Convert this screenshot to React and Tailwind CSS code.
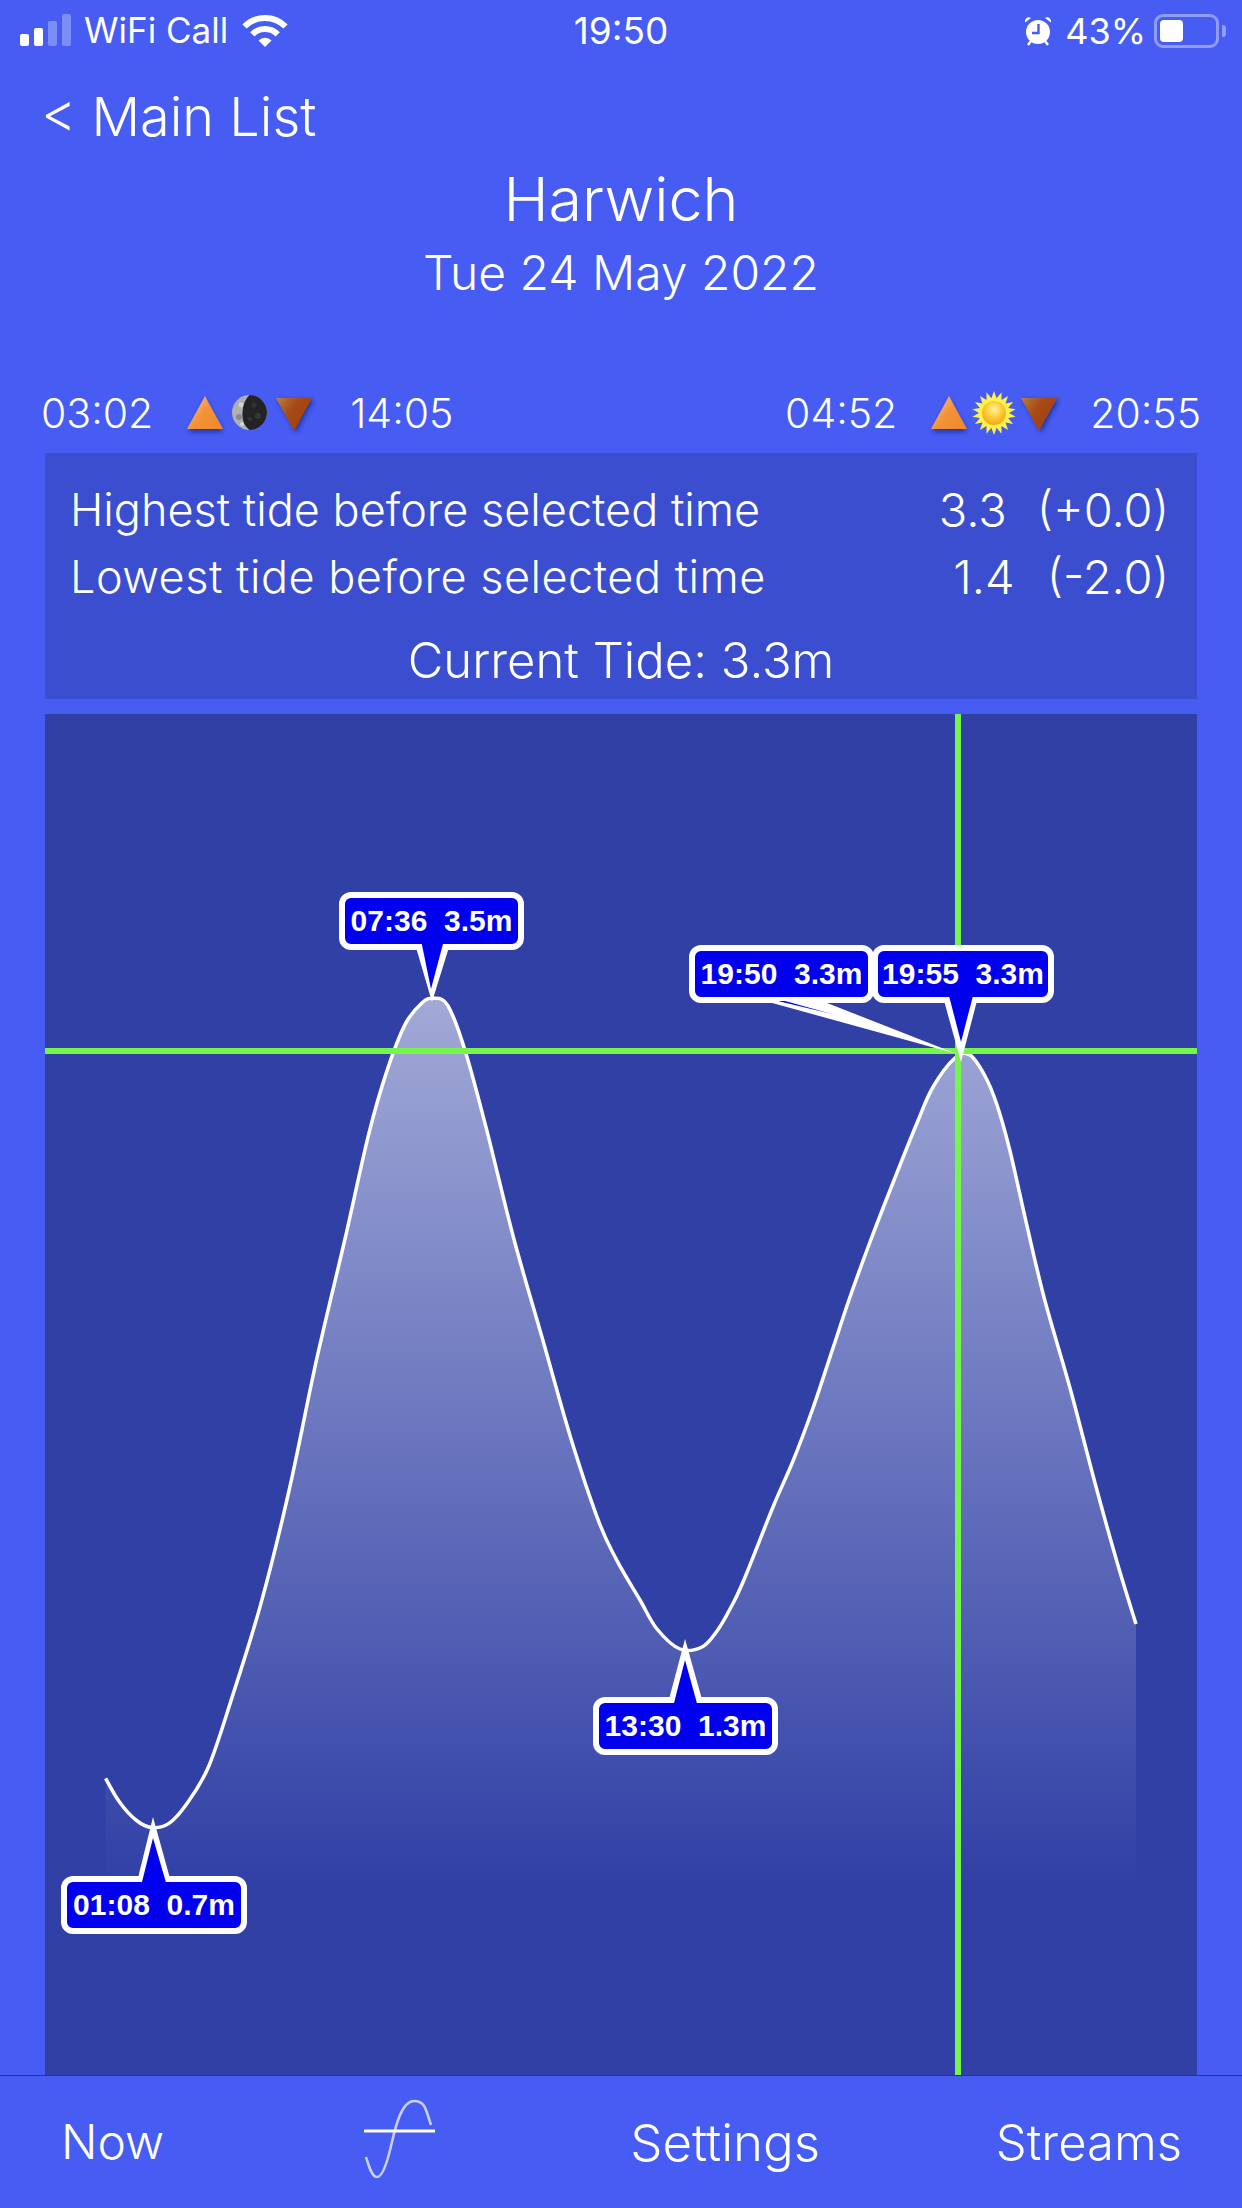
const pts = [...[[75,1263],[85,1280],[97,1293],[108,1298],[120,1295],[132,1282],[148,1255],[165,1205],[185,1140],[205,1060],[225,965],[245,880],[262,805],[275,760],[288,727],[300,712],[308,709],[318,714],[330,745],[345,800],[365,880],[385,950],[405,1020],[425,1080],[438,1108]].map(([x, y]) => [x * 1.408, y * 1.408]),
  [640,1600],[657,1629],[680,1649],[702,1647],[717,1631],[730,1609],[743,1582],[773,1507],[793,1461],[813,1408],[833,1348],[850,1297],[870,1242],[887,1198],[917,1123],[933,1087],[955,1058],[970,1055],[985,1076],[997,1105],[1010,1151],[1027,1226],[1045,1301],[1070,1388],[1095,1483],[1117,1562],[1136,1624]];

function curvePath() {
  let d = `M${pts[0][0].toFixed(1)} ${pts[0][1].toFixed(1)}`;
  for (let i = 0; i < pts.length - 1; i++) {
    const p0 = pts[Math.max(i - 1, 0)], p1 = pts[i], p2 = pts[i + 1], p3 = pts[Math.min(i + 2, pts.length - 1)];
    const c1 = [p1[0] + (p2[0] - p0[0]) / 6, p1[1] + (p2[1] - p0[1]) / 6];
    const c2 = [p2[0] - (p3[0] - p1[0]) / 6, p2[1] - (p3[1] - p1[1]) / 6];
    d += ` C${c1[0].toFixed(1)} ${c1[1].toFixed(1)} ${c2[0].toFixed(1)} ${c2[1].toFixed(1)} ${p2[0].toFixed(1)} ${p2[1].toFixed(1)}`;
  }
  return d;
}
const line = curvePath();
const area = `${line} L${pts[pts.length - 1][0].toFixed(1)} 1890 L${pts[0][0].toFixed(1)} 1890 Z`;

function Triangle({ down }) {
  const id = down ? "triDown" : "triUp";
  return (
    <svg width="44" height="44" viewBox="0 0 44 44" className={`shrink-0 -mx-[4px] ${down ? "mt-[7px]" : "mt-[3px]"}`}>
      <defs>
        <linearGradient id={id} x1="0" y1="0" x2="1" y2="0.7">
          {down ? (
            <>
              <stop offset="0" stopColor="#b8803f" />
              <stop offset="0.45" stopColor="#a64a16" />
              <stop offset="1" stopColor="#a13f10" />
            </>
          ) : (
            <>
              <stop offset="0" stopColor="#f8cfa3" />
              <stop offset="0.55" stopColor="#f39238" />
              <stop offset="1" stopColor="#f18a2c" />
            </>
          )}
        </linearGradient>
        <filter id={id + "s"} x="-30%" y="-30%" width="160%" height="160%">
          <feGaussianBlur stdDeviation="2" />
        </filter>
      </defs>
      <polygon
        points={down ? "6,5 42,5 24,38" : "22,6 40,39 6,39"}
        fill="#1c2a80"
        opacity="0.75"
        filter={`url(#${id}s)`}
      />
      <polygon points={down ? "4,3 40,3 22,36" : "22,3 40,36 4,36"} fill={`url(#${id})`} />
    </svg>
  );
}

function Moon() {
  return (
    <svg width="35" height="35" viewBox="0 0 35 35" className="shrink-0 mt-[-2px]">
      <circle cx="17.5" cy="17.5" r="17.5" fill="#b0b0b2" />
      <circle cx="7" cy="22" r="3" fill="#8a8a8c" />
      <circle cx="9" cy="10" r="2.4" fill="#d6d6d8" />
      <circle cx="10" cy="29" r="2" fill="#d8d8d8" />
      <path d="M17.5 0A17.5 17.5 0 0 1 17.5 35Q9.5 29 10.5 17.5Q11 6 17.5 0Z" fill="#232325" />
      <circle cx="22" cy="10" r="2.6" fill="#333335" />
      <circle cx="26" cy="21" r="3" fill="#363638" />
      <circle cx="18" cy="24" r="2" fill="#353537" />
    </svg>
  );
}

function Sun() {
  const rays = [];
  const n = 18;
  for (let i = 0; i < n * 2; i++) {
    const r = i % 2 === 0 ? 22 : 15;
    const a = (i / (n * 2)) * Math.PI * 2 - Math.PI / 2;
    rays.push(`${(22 + r * Math.cos(a)).toFixed(1)},${(22 + r * Math.sin(a)).toFixed(1)}`);
  }
  return (
    <svg width="44" height="44" viewBox="0 0 44 44" className="shrink-0">
      <defs>
        <radialGradient id="sunCore" cx="0.5" cy="0.35" r="0.7">
          <stop offset="0" stopColor="#fff49a" />
          <stop offset="0.55" stopColor="#fcc62c" />
          <stop offset="1" stopColor="#f0a020" />
        </radialGradient>
      </defs>
      <polygon points={rays.join(" ")} fill="#fdf24a" />
      <circle cx="22" cy="22" r="12" fill="url(#sunCore)" />
    </svg>
  );
}

function Callout({ pos, children }) {
  return (
    <div className={`absolute h-[58px] flex items-center justify-center rounded-[12px] border-[6px] border-white bg-[#0000ee] font-['Liberation_Sans',sans-serif] text-[30px] font-bold leading-none whitespace-pre text-white ${pos}`}>
      {children}
    </div>
  );
}

function Tail({ outer, inner }) {
  return (
    <>
      <polygon points={outer} fill="#fff" />
      <polygon points={inner} fill="#0000ee" />
    </>
  );
}

export default function App() {
  return (
    <div className="w-[1242px] h-[2208px] flex flex-col overflow-hidden bg-[#465cf3] text-white font-['Inter',sans-serif] font-light">
      {/* status bar */}
      <div className="h-[61px] shrink-0 relative flex items-center">
        <div className="flex items-end gap-[5px] ml-[20px] h-[32px] mt-[-2px]">
          <div className="w-[9px] h-[12px] rounded-[2px] bg-white" />
          <div className="w-[9px] h-[18px] rounded-[2px] bg-white" />
          <div className="w-[9px] h-[25px] rounded-[2px] bg-white/30" />
          <div className="w-[9px] h-[32px] rounded-[2px] bg-white/30" />
        </div>
        <span className="ml-[13px] text-[35px] leading-none font-normal">WiFi Call</span>
        <svg width="46" height="33" viewBox="0 0 46 33" className="ml-[14px] mt-[-1px]">
          <path d="M2.5 12.5A29 29 0 0 1 43.5 12.5" fill="none" stroke="#fff" strokeWidth="6" />
          <path d="M10.3 20.3A18 18 0 0 1 35.7 20.3" fill="none" stroke="#fff" strokeWidth="6" />
          <path d="M23 33L16.5 26.5A9.2 9.2 0 0 1 29.5 26.5Z" fill="#fff" />
        </svg>
        <span className="absolute left-0 right-0 text-center text-[37px] leading-none font-normal">19:50</span>
        <div className="ml-auto flex items-center">
          <svg width="28" height="30" viewBox="0 0 28 30">
            <circle cx="14" cy="16" r="12" fill="#fff" />
            <path d="M1 6.5A4 4 0 0 1 7 2ZM27 6.5A4 4 0 0 0 21 2Z" fill="#fff" />
            <path d="M4 29l3-4M24 29l-3-4" stroke="#fff" strokeWidth="2.4" />
            <path d="M14.5 8v9H8" fill="none" stroke="#465cf3" strokeWidth="2.4" />
          </svg>
          <span className="ml-[13px] text-[36px] leading-none font-normal">43%</span>
          <div className="ml-[8px] w-[65px] h-[34px] rounded-[9px] border-[3px] border-white/40 p-[3px] flex">
            <div className="w-[23px] h-full rounded-[4px] bg-white" />
          </div>
          <div className="ml-[3px] mr-[16px] w-[4px] h-[12px] rounded-r-[3px] bg-white/40" />
        </div>
      </div>

      {/* heading */}
      <div className="h-[111px] shrink-0 pl-[41px] text-[54px] leading-[111px]">&lt; Main List</div>
      <h1 className="h-[55px] shrink-0 text-center text-[61px] leading-[55px] font-light">Harwich</h1>
      <div className="h-[91px] shrink-0 text-center text-[48px] leading-[91px]">Tue 24 May 2022</div>

      {/* tide/sun row */}
      <div className="mt-[60px] h-[70px] shrink-0 flex items-center justify-between px-[41px] text-[41px] leading-none">
        <div className="flex items-center">
          <span>03:02</span>
          <div className="ml-[34px] flex items-center gap-[9px]">
            <Triangle />
            <Moon />
            <Triangle down />
          </div>
          <span className="ml-[38px]">14:05</span>
        </div>
        <div className="flex items-center">
          <span>04:52</span>
          <div className="ml-[34px] flex items-center gap-[5px]">
            <Triangle />
            <Sun />
            <Triangle down />
          </div>
          <span className="ml-[33px]">20:55</span>
        </div>
      </div>

      {/* info panel */}
      <div className="mt-[5px] mx-[45px] h-[246px] shrink-0 bg-[#3b4ed0] pt-[26px] pl-[25px] pr-[28px]">
        <div className="h-[60px] flex items-center justify-between text-[45px] leading-none">
          <span>Highest tide before selected time</span>
          <span className="flex items-center gap-[30px] text-[47px]">
            <span>3.3</span>
            <span>(+0.0)</span>
          </span>
        </div>
        <div className="mt-[7px] h-[60px] flex items-center justify-between text-[45px] leading-none">
          <span className="tracking-[0.5px]">Lowest tide before selected time</span>
          <span className="flex items-center gap-[32px] text-[47px]">
            <span>1.4</span>
            <span>(-2.0)</span>
          </span>
        </div>
        <div className="mt-[24px] h-[60px] flex items-center justify-center text-[49px] leading-none -ml-[25px] -mr-[28px]">
          Current Tide: 3.3m
        </div>
      </div>

      {/* chart */}
      <div className="mt-[15px] mx-[45px] flex-1 relative bg-[#3040a5] overflow-hidden">
        <svg className="absolute inset-0 w-full h-full" viewBox="45 714 1152 1361">
          <defs>
            <linearGradient id="tideFill" gradientUnits="userSpaceOnUse" x1="0" y1="1000" x2="0" y2="1885">
              <stop offset="0" stopColor="#fff" stopOpacity="0.55" />
              <stop offset="1" stopColor="#fff" stopOpacity="0" />
            </linearGradient>
          </defs>
          <path d={area} fill="url(#tideFill)" />
          <path d={line} fill="none" stroke="#fff" strokeWidth="3.5" />
          <rect x="45" y="1048" width="1152" height="6" fill="#76f64a" />
          <rect x="955" y="714" width="6" height="1361" fill="#76f64a" />
        </svg>
        <Callout pos="left-[294px] top-[178px] w-[185px]">07:36  3.5m</Callout>
        <Callout pos="left-[16px] top-[1162px] w-[186px]">01:08  0.7m</Callout>
        <Callout pos="left-[548px] top-[983px] w-[185px]">13:30  1.3m</Callout>
        <Callout pos="left-[644px] top-[231px] w-[185px]">19:50  3.3m</Callout>
        <Callout pos="left-[827px] top-[231px] w-[182px]">19:55  3.3m</Callout>
        <svg className="absolute inset-0 w-full h-full" viewBox="45 714 1152 1361">
          <Tail outer="415,944 432,1002 450,944" inner="421,940 431,989 444,940" />
          <Tail outer="137,1882 153,1817 171,1882" inner="141,1886 153,1838 167,1886" />
          <Tail outer="668,1703 685,1639 703,1703" inner="673,1707 685,1660 698,1707" />
          <Tail outer="765,1001 957,1054 822,1001" inner="778,1001 832,1014 785,1001" />
          <Tail outer="943,997 961,1062 978,997" inner="948,992 961,1042 974,992" />
        </svg>
      </div>

      {/* tab bar */}
      <div className="h-[133px] shrink-0 border-t border-[#27348c] flex items-center leading-none">
        <span className="ml-[61px] text-[48px]">Now</span>
        <svg width="72" height="80" viewBox="0 0 72 80" className="ml-[200px] mt-[-6px]">
          <path d="M2 58C5 68 8 78 13 78C19 78 24 60 27 47C31 30 37 2 50 2C62 2 62 12 67 26" fill="none" stroke="#dfe3fb" strokeOpacity="0.85" strokeWidth="2.6" />
          <path d="M0 32H71" stroke="#fff" strokeWidth="3" />
        </svg>
        <span className="ml-[194px] text-[51px]">Settings</span>
        <span className="ml-auto mr-[60px] text-[49px]">Streams</span>
      </div>
    </div>
  );
}
